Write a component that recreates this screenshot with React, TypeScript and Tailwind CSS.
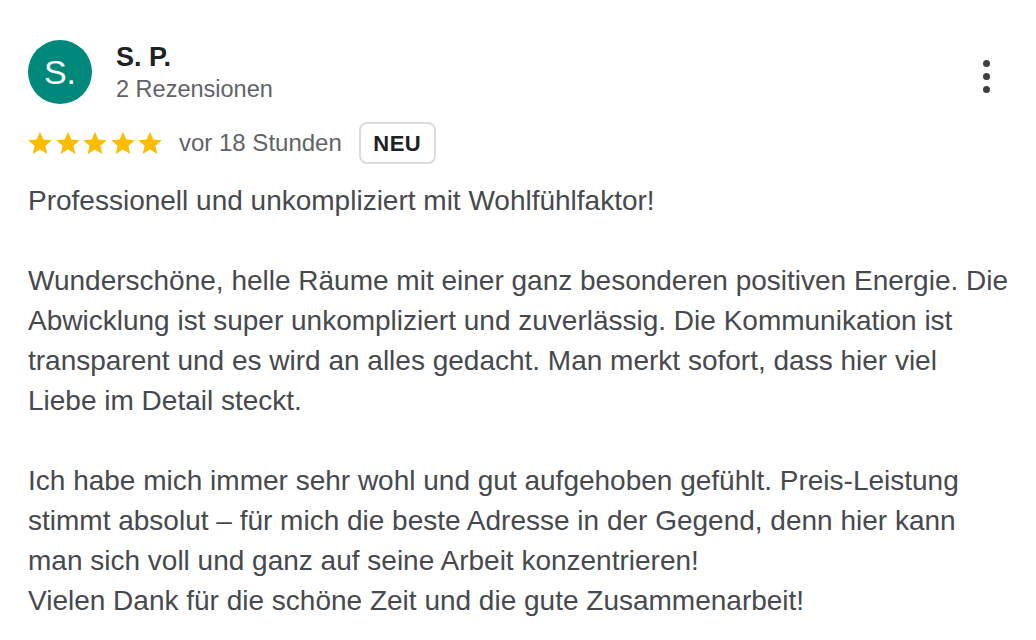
const font = { fontFamily: '"Liberation Sans", Arial, Helvetica, sans-serif' };

function Star() {
  return (
    <svg viewBox="0 0 24 24" className="w-[26px] h-[26px]" aria-hidden>
      <path
        fill="#fbbc04"
        d="M12 1.6l3.1 7.1 7.7.7-5.8 5.1 1.7 7.6L12 18.1l-6.7 4 1.7-7.6-5.8-5.1 7.7-.7z"
      />
    </svg>
  );
}

const body = `Professionell und unkompliziert mit Wohlfühlfaktor!

Wunderschöne, helle Räume mit einer ganz besonderen positiven Energie. Die Abwicklung ist super unkompliziert und zuverlässig. Die Kommunikation ist transparent und es wird an alles gedacht. Man merkt sofort, dass hier viel Liebe im Detail steckt.

Ich habe mich immer sehr wohl und gut aufgehoben gefühlt. Preis-Leistung stimmt absolut – für mich die beste Adresse in der Gegend, denn hier kann man sich voll und ganz auf seine Arbeit konzentrieren!
Vielen Dank für die schöne Zeit und die gute Zusammenarbeit!`;

export default function App() {
  return (
    <div className="w-[1036px] h-[640px] bg-white overflow-hidden" style={font}>
      <div className="pl-[28px] pr-[27px] pt-[40px]">
        <div className="flex items-start">
          <div className="w-[64px] h-[64px] rounded-full bg-[#00897b] flex items-center justify-center text-white text-[34px] leading-none shrink-0">
            S.
          </div>
          <div className="ml-[24px] flex flex-col">
            <div className="mt-[3px] text-[27px] leading-[28px] font-bold text-[#202124]">S. P.</div>
            <div className="mt-[4px] text-[23.5px] leading-[28px] text-[#5f6368]">2 Rezensionen</div>
          </div>
          <button className="ml-auto mr-[15px] mt-[16px] flex flex-col items-center gap-[6px] p-[4px]" aria-label="Mehr">
            <span className="w-[7px] h-[7px] rounded-full bg-[#3c4043]" />
            <span className="w-[7px] h-[7px] rounded-full bg-[#3c4043]" />
            <span className="w-[7px] h-[7px] rounded-full bg-[#3c4043]" />
          </button>
        </div>

        <div className="mt-[18px] flex items-center">
          <div className="flex gap-[1.5px] -ml-[1px]">
            <Star />
            <Star />
            <Star />
            <Star />
            <Star />
          </div>
          <span className="ml-[16px] text-[24px] leading-[28px] text-[#5f6368]">vor 18 Stunden</span>
          <span className="ml-[17px] h-[42px] w-[77px] flex items-center justify-center rounded-[8px] border-2 border-[#dadce0] text-[22px] font-bold tracking-[0.5px] text-[#202124]">
            NEU
          </span>
        </div>

        <p className="mt-[17px] text-[28px] leading-[40px] text-[#46494e] whitespace-pre-line">{body}</p>
      </div>
    </div>
  );
}
